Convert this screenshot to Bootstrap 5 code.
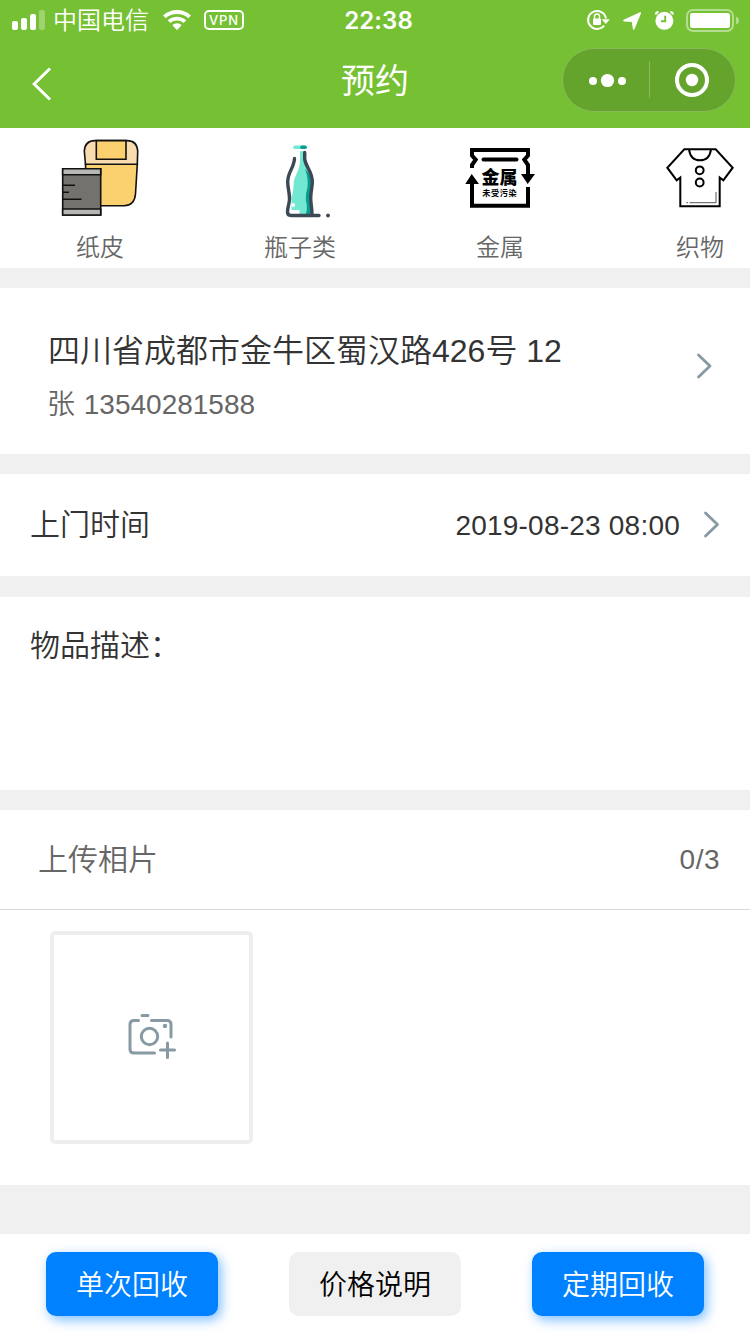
<!DOCTYPE html>
<html lang="zh-CN">
<head>
<meta charset="utf-8">
<meta name="viewport" content="width=device-width, initial-scale=1">
<title>预约</title>
<link rel="stylesheet" href="https://cdn.jsdelivr.net/npm/bootstrap@5.3.0/dist/css/bootstrap.min.css">
<style>
  body { font-family: "Liberation Sans", "Noto Sans CJK SC", sans-serif; font-weight: 350; background: #f0f0f0; color: #333; overflow: hidden; }
  svg { display: block; flex: none; }
  .screen { width: 750px; height: 1334px; }
  .topbar { height: 128px; background: #76c133; color: #fff; }
  .statusbar { height: 40px; padding-left: 12px; padding-right: 11px; }
  .carrier { font-size: 24px; line-height: 38px; padding-top: 2px; margin-left: 8px; }
  .wifi { margin-left: 14px; }
  .vpn { width: 40px; height: 20px; border: 2px solid #fff; border-radius: 5px; font: 500 13px/16px Inter, sans-serif; letter-spacing: .8px; text-align: center; margin-left: 13px; }
  .clock { font: 600 24px/38px Inter, sans-serif; letter-spacing: .1px; padding: 2px 0 0 6px; }
  .titlebar { height: 88px; padding-left: 14px; padding-right: 14px; }
  .back { margin: 26px 0 0 18px; }
  .page-title { font-size: 34px; line-height: 80px; padding-top: 1px; font-weight: 400; }
  .capsule { width: 174px; height: 64px; border-radius: 32px; background: #65a42c; border: 1px solid #86b95a; }
  .side { flex: 1 1 0; }
  .cats { height: 140px; }
  .cat { width: 200px; padding-top: 10px; color: #666; font-size: 24px; line-height: 36px; }
  .cat span { margin-top: 12px; }
  .block { margin-bottom: 20px; }
  .addr { height: 166px; padding: 0 37px 0 48px; }
  .addr-text { padding-top: 11px; }
  .addr-main { font-size: 32px; line-height: 48px; }
  .addr-sub { font-size: 28px; line-height: 42px; color: #666; margin-top: 9px; margin-left: -1px; word-spacing: 1px; }
  .addr svg { margin-top: -10px; }
  .when { height: 102px; margin-bottom: 21px; padding: 0 30px; font-size: 30px; line-height: 43px; padding-bottom: 1px; }
  .when-value { font-size: 28px; letter-spacing: .22px; margin-right: 23px; padding-top: 1px; }
  .desc { height: 193px; padding: 26px 30px; font-size: 30px; line-height: 45px; }
  .upload { height: 375px; margin-bottom: 49px; }
  .upload-head { height: 100px; border-bottom: 1px solid #d9d9d9; padding: 0 30px 0 38px; font-size: 30px; color: #666; }
  .count { font-size: 28px; letter-spacing: .5px; padding-top: 1px; }
  .picker { width: 203px; height: 213px; border: 4px solid #eee; border-radius: 5px; margin: 21px 0 0 50px; padding: 0 0 4px 0; }
  .actions { height: 100px; padding: 18px 46px 0; }
  .act { width: 172px; height: 64px; border: 0; border-radius: 10px; padding: 3px 0 0; font-size: 28px; line-height: 61px; font-weight: 350; }
  .act-blue, .act-blue:hover { background: #0081ff; color: #fff; box-shadow: 3px 4px 12px rgba(0,129,255,.5); }
  .act-gray, .act-gray:hover { background: #f0f0f0; color: #000; }
</style>
</head>
<body>
<div class="screen d-flex flex-column">
  <header class="topbar">
    <div class="statusbar d-flex align-items-center">
      <div class="side d-flex align-items-center">
        <svg width="33" height="20" fill="#fff"><rect x="0" y="11" width="6" height="9" rx="2"/><rect x="9" y="8" width="6" height="12" rx="2"/><rect x="18" y="4" width="6" height="16" rx="2"/><rect x="27" y="0" width="6" height="20" rx="2" opacity=".3"/></svg>
        <span class="carrier">中国电信</span>
        <svg class="wifi" width="28" height="21" viewBox="0 0 28 21" fill="#fff"><path d="M0 5.500Q6 0 14 0T28 5.500L25.300 8.200Q20.500 4 14 4T2.700 8.200Z"/><path d="M4.700 10.200Q8.700 6.700 14 6.700T23.300 10.200L20.600 12.900Q17.800 10.600 14 10.600T7.400 12.900Z"/><path d="M9.300 15Q11.300 13.200 14 13.200T18.700 15L14.700 19.600Q14 20.300 13.300 19.600Z"/></svg>
        <span class="vpn">VPN</span>
      </div>
      <div class="clock">22:38</div>
      <div class="side d-flex align-items-center justify-content-end">
        <svg width="153" height="24" viewBox="0 0 153 24" fill="#fff">
          <path d="M18.200 17.500A9 9 0 1 1 20 10.500" fill="none" stroke="#fff" stroke-width="2"/><path d="M15.600 11.200h8.200L19.800 15.900Z"/><rect x="7" y="10.500" width="8" height="6.500" rx="1"/><path d="M8.500 11V8.500a2.500 2.500 0 0 1 5 0v2.500" fill="none" stroke="#fff" stroke-width="1.500"/>
          <path d="M54.300 5 38 12.600 46.500 13.200 47.700 21Z" stroke="#fff" stroke-width="1.600" stroke-linejoin="round"/>
          <circle cx="78.400" cy="12.800" r="9"/><path d="M70 6.500Q69.800 4.200 72.500 4M86.800 6.500Q87 4.200 84.300 4" fill="none" stroke="#fff" stroke-width="2.200"/><path d="M79.200 7.800V13.300H75" fill="none" stroke="#76c133" stroke-width="1.900"/>
          <rect x="101" y="2" width="46" height="21" rx="6" fill="none" stroke="#fff" stroke-width="2" opacity=".45"/><rect x="104" y="5" width="40" height="15" rx="2.500"/><path d="M150 8.500Q153 9.500 153 12.500T150 16.500Z" opacity=".45"/>
        </svg>
      </div>
    </div>
    <div class="titlebar d-flex align-items-start">
      <div class="side"><svg class="back" width="20" height="36" viewBox="0 0 20 36"><path d="M18 2.500 2.200 18 18 33.500" fill="none" stroke="#fff" stroke-width="3"/></svg></div>
      <h1 class="page-title m-0">预约</h1>
      <div class="side d-flex justify-content-end">
        <div class="capsule mt-2"><svg width="172" height="62" viewBox="0 0 172 62" fill="#fff"><circle cx="30" cy="32" r="4"/><circle cx="44.500" cy="31.500" r="6.600"/><circle cx="59" cy="32" r="4"/><path d="M86.500 12v37" stroke="#86b95a"/><circle cx="129" cy="31" r="15" fill="none" stroke="#fff" stroke-width="4"/><circle cx="129" cy="31" r="6.200"/></svg></div>
      </div>
    </div>
  </header>

  <nav class="cats block bg-white d-flex overflow-hidden">
    <div class="cat d-flex flex-column align-items-center flex-shrink-0">
      <svg width="80" height="80" viewBox="0 0 80 80" stroke="#111" stroke-width="1.600"><path d="M25.500 26.300H77.300L75.500 56Q74.500 67.700 64 67.700H27Z" fill="#fbd16f"/><path d="M25.500 26.300 24.300 13Q25 2.600 35 2.600H67Q77 2.600 77.700 13L77.300 26.300Z" fill="#f8dcb0"/><path d="M36.300 2.600V21.300H66V2.600Z" fill="#fbd16f"/><path d="M2.700 30.700H40.700V77H2.700Z" fill="#74726d"/><path d="M2.700 30.700H40.700V36.700H2.700ZM2.700 71H40.700V77H2.700Z" fill="#b5b8b5"/><path d="M3 47.300H15M3 54.300H9M3 61.300H21.500"/></svg>
      <span>纸皮</span>
    </div>
    <div class="cat d-flex flex-column align-items-center flex-shrink-0">
      <svg width="80" height="80" viewBox="0 0 80 80" fill="none" stroke-linecap="round"><path d="M40 13.300H44V23L51 36V46L50 58 51.500 76H39.500V72H31.500V59Q33 56 33.500 49Q33 43 36 37Q40 29 40 22Z" fill="#72e8d3"/><path d="M45 31Q50.500 36 51.500 44Q49.500 60 52 76H45.800Q48 70 45.800 62Q45.500 56 47.500 49Q48.500 40 45 31Z" fill="#049e90"/><path d="M31 73.700H38.700" stroke="#fff" stroke-width="3" stroke-linecap="butt"/><circle cx="33.200" cy="67" r="1.900" fill="#fff"/><path d="M35 9.300H45" stroke="#72e8d3" stroke-width="3.600"/><path d="M42 9.300H45" stroke="#049e90" stroke-width="3.600"/><path d="M34.500 20.500C34 30 27.700 34 27.700 44C27.700 50 29.700 55 29.500 61C29.300 67 27.500 69 27.500 74Q27.500 77.500 31 77.500H59" stroke="#3d4855" stroke-width="3.400"/><path d="M44.700 14.500V21C45.500 29 52.300 33 52.300 44C52.300 50 50.700 53 50.700 60C50.700 66 52 70 52 76" stroke="#3d4855" stroke-width="3.400"/><circle cx="68" cy="77.500" r="1.900" fill="#3d4855"/></svg>
      <span>瓶子类</span>
    </div>
    <div class="cat d-flex flex-column align-items-center flex-shrink-0">
      <svg width="80" height="80" viewBox="0 0 80 80"><g fill="none" stroke="#000" stroke-width="4"><path d="M12 30V27L15.700 21.700 12 17.500V12H68V17.500L64.300 21.700 68 27V38M12 44V67.700H68V49"/><path d="M23.500 21.500H56.500" stroke-linecap="round"/></g><path d="M11.700 36 19 46H5.300ZM67.700 46 61 36H75Z"/><text x="39.500" y="46.300" font-size="18" font-weight="900" text-anchor="middle">金属</text><text x="39.800" y="57.800" font-size="8.200" font-weight="700" letter-spacing=".6" text-anchor="middle">未受污染</text></svg>
      <span>金属</span>
    </div>
    <div class="cat d-flex flex-column align-items-center flex-shrink-0">
      <svg width="80" height="80" viewBox="0 0 80 80" fill="none" stroke="#000" stroke-width="2"><path d="M24.300 11.300H55.700L72.700 29.700 63.300 42.300 59.700 39.500V68.300H20.300V39.500L16.700 42.300 7.300 29.700ZM29 11.300Q30.500 22.300 40 22.300T51 11.300"/><circle cx="39.700" cy="32.300" r="3.900"/><circle cx="39.700" cy="44.500" r="3.900"/><path d="M56 54V64.700H29.500M28 64.700H26.300" stroke="#555" stroke-width="1"/></svg>
      <span>织物</span>
    </div>
  </nav>

  <section class="addr block bg-white d-flex align-items-center justify-content-between">
    <div class="addr-text">
      <div class="addr-main">四川省成都市金牛区蜀汉路426号 12</div>
      <div class="addr-sub">张 13540281588</div>
    </div>
    <svg width="17" height="26" viewBox="0 0 17 26"><path d="M2.500 2 14 13 2.500 24" fill="none" stroke="#8799a3" stroke-width="2.800" stroke-linecap="round" stroke-linejoin="round"/></svg>
  </section>

  <section class="when bg-white d-flex align-items-center">
    <span>上门时间</span>
    <span class="when-value ms-auto">2019-08-23 08:00</span>
    <svg width="17" height="28" viewBox="0 0 17 28"><path d="M2.500 2 14.500 13.500 2.500 25" fill="none" stroke="#8799a3" stroke-width="2.800" stroke-linecap="round" stroke-linejoin="round"/></svg>
  </section>

  <section class="desc block bg-white">物品描述：</section>

  <section class="upload bg-white">
    <div class="upload-head d-flex align-items-center justify-content-between"><span>上传相片</span><span class="count">0/3</span></div>
    <div class="picker d-flex align-items-center justify-content-center">
      <svg width="48" height="46" viewBox="0 0 48 46" fill="none" stroke="#8799a3" stroke-width="3" stroke-linecap="round" stroke-linejoin="round"><path d="M14 2.500H20M10.500 7.500H6Q2 7.500 2 11.500V36Q2 40 6 40H26.500M23.500 7.500H39Q43 7.500 43 11.500V24M39.500 30V44.500M32.500 37H46.500"/><circle cx="21.500" cy="23.500" r="8.200"/><circle cx="37" cy="13" r="2.200" fill="#8799a3" stroke="none"/></svg>
    </div>
  </section>

  <footer class="actions bg-white d-flex justify-content-between align-items-start">
    <button class="btn act act-blue">单次回收</button>
    <button class="btn act act-gray">价格说明</button>
    <button class="btn act act-blue">定期回收</button>
  </footer>
</div>
<script src="https://cdn.jsdelivr.net/npm/bootstrap@5.3.0/dist/js/bootstrap.bundle.min.js"></script>
</body>
</html>
